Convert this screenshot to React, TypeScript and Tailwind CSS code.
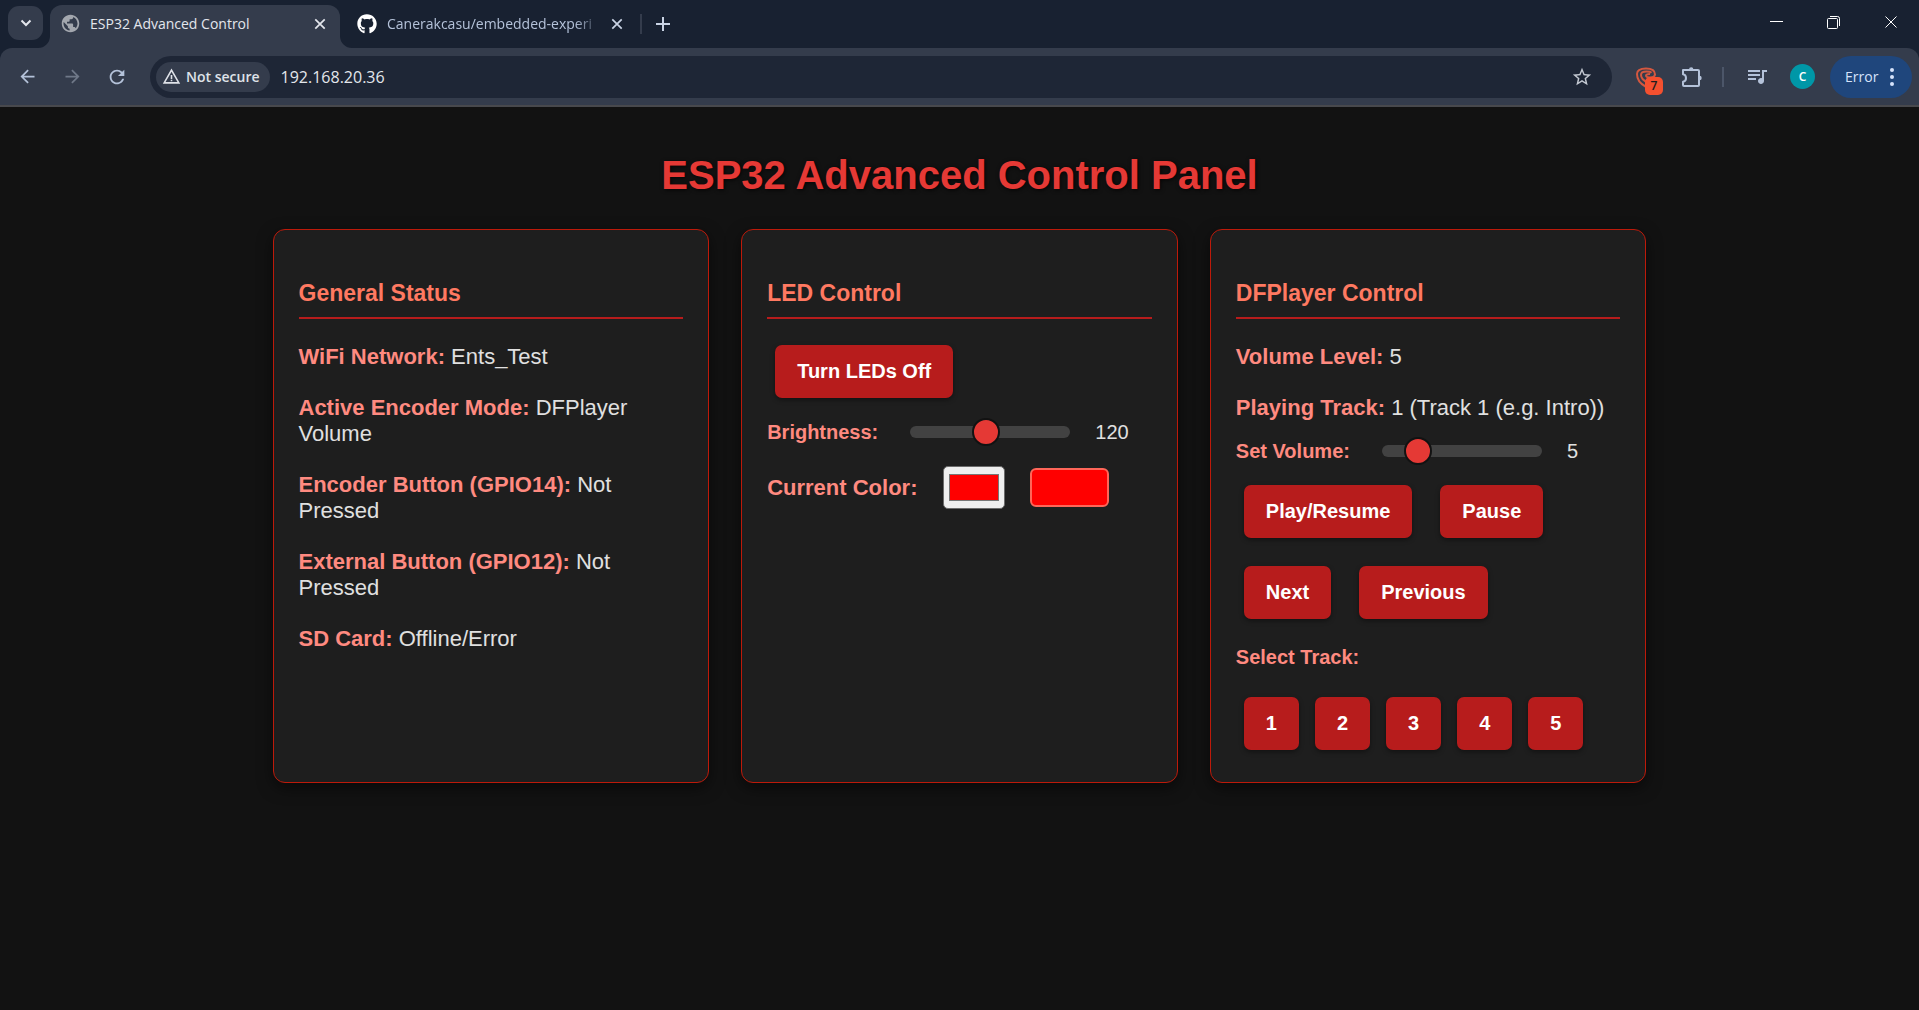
import { useState } from "react";
import type { ReactNode } from "react";
import {
  MdArrowBack,
  MdArrowForward,
  MdPublic,
  MdQueueMusic,
  MdRefresh,
  MdStarBorder,
  MdWarningAmber,
} from "react-icons/md";
import { FaGithub } from "react-icons/fa";

function Cross({ className }: { className: string }) {
  return (
    <svg viewBox="0 0 14 14" className={className} fill="none" stroke="currentColor" aria-hidden="true">
      <path d="M1.5 1.5 12.5 12.5M12.5 1.5 1.5 12.5" />
    </svg>
  );
}

function TabStrip() {
  return (
    <div className="flex h-12 items-stretch pl-2">
      <button
        aria-label="Search tabs"
        className="mt-1.5 flex h-[34px] w-[35px] items-center justify-center rounded-[11px] bg-[#343c4c] text-[#e3e6ec]"
      >
        <svg viewBox="0 0 12 8" className="w-3" fill="none" stroke="currentColor" strokeWidth="2" aria-hidden="true">
          <path d="M1.5 1.5 6 6l4.5-4.5" />
        </svg>
      </button>

      <div className="relative mt-[5px] ml-[7px] flex w-[290px] items-center rounded-t-xl bg-[#343c4c] pr-3.5 pb-1.5 pl-2.5">
        <svg viewBox="0 0 12 12" className="absolute bottom-0 -left-3 w-3" aria-hidden="true">
          <path d="M12 0v12H0A12 12 0 0 0 12 0Z" fill="#343c4c" />
        </svg>
        <svg viewBox="0 0 12 12" className="absolute -right-3 bottom-0 w-3" aria-hidden="true">
          <path d="M0 0v12h12A12 12 0 0 1 0 0Z" fill="#343c4c" />
        </svg>
        <MdPublic className="size-[21px] text-[#a3a7ae]" />
        <span className="ml-[9px] flex-1 text-sm text-[#e3e6ec]">ESP32 Advanced Control</span>
        <button aria-label="Close tab" className="text-[#e3e6ec]">
          <Cross className="w-3 stroke-2" />
        </button>
      </div>

      <div className="mt-[5px] ml-[17px] flex items-center pb-1.5">
        <FaGithub className="size-5 text-white" />
        <span className="ml-2.5 w-[214px] overflow-hidden text-sm whitespace-nowrap text-[#b4c2d9] [mask-image:linear-gradient(to_right,black_88%,transparent)]">
          Canerakcasu/embedded-experi
        </span>
        <button aria-label="Close tab" className="ml-2.5 text-[#c9d3e4]">
          <Cross className="w-3 stroke-2" />
        </button>
        <span className="ml-[17px] h-5 w-0.5 bg-[#343c4c]" />
        <button aria-label="New tab" className="ml-3.5 text-[#c9d3e4]">
          <svg viewBox="0 0 14 14" className="w-3.5" stroke="currentColor" strokeWidth="2" aria-hidden="true">
            <path d="M7 0v14M0 7h14" />
          </svg>
        </button>
      </div>

      <div className="ml-auto flex items-center gap-11 pr-[21px] pb-1 text-white">
        <button aria-label="Minimize">
          <svg viewBox="0 0 13 13" className="w-[13px]" stroke="currentColor" aria-hidden="true">
            <path d="M0 5.5h13" />
          </svg>
        </button>
        <button aria-label="Restore">
          <svg viewBox="0 0 13 13" className="w-[13px]" fill="none" stroke="currentColor" aria-hidden="true">
            <rect x=".5" y="2.5" width="10" height="10" rx="1" />
            <path d="M3 .5h7.5a2 2 0 0 1 2 2V10" />
          </svg>
        </button>
        <button aria-label="Close">
          <Cross className="w-3.5" />
        </button>
      </div>
    </div>
  );
}

function ShieldIcon() {
  return (
    <svg viewBox="0 0 22 22" className="w-[22px]" fill="none" stroke="#d4573f" strokeWidth="2" aria-hidden="true">
      <path d="M20 8.500C20 4 17 2.500 11 2.500S2 4 2 8c0 5.500 3 9.500 8.500 12.500" />
      <path d="M20 8c0 2.800-2 3.500-5 3.500-2.500 0-4-.8-4-2s1.200-1.500 4-1.500" />
      <path d="M16.500 6.800C15.500 5.800 14 5.600 11.500 5.600 7.500 5.600 6 6.800 6 9c0 3.200 2.500 5.500 6.500 7.500" />
    </svg>
  );
}

function Toolbar() {
  return (
    <div className="flex h-[59px] items-center rounded-t-xl border-b-2 border-[#48494d] bg-[#343c4c] pr-[7px] pl-[17px] text-[#b4c2d9]">
      <button aria-label="Back">
        <MdArrowBack className="size-[21px]" />
      </button>
      <button aria-label="Forward" className="ml-6 text-[#6f7888]">
        <MdArrowForward className="size-[21px]" />
      </button>
      <button aria-label="Reload" className="ml-[23px]">
        <MdRefresh className="size-[22px]" />
      </button>

      <div className="ml-[22px] flex h-[42px] flex-1 items-center rounded-full bg-[#1e2636] pr-[19px] pl-1.5">
        <button className="flex h-[30px] items-center rounded-full bg-[#343c4c] pr-2.5 pl-1.5 text-sm font-semibold text-[#dfe2e8]">
          <MdWarningAmber className="mr-[5px] size-[19px]" />
          Not secure
        </button>
        <input
          aria-label="Address"
          defaultValue="192.168.20.36"
          className="ml-[11px] min-w-0 flex-1 bg-transparent text-base text-[#e3e6ec] outline-none"
        />
        <button aria-label="Bookmark this page" className="text-[#c4c9d2]">
          <MdStarBorder className="size-[22px]" />
        </button>
      </div>

      <button aria-label="Content blocker" className="relative ml-[23px]">
        <ShieldIcon />
        <span className="absolute top-[11px] left-2.5 flex size-[18px] items-center justify-center rounded-[5px] bg-[#f4502f] text-xs font-semibold text-[#1d1d1d]">
          7
        </span>
      </button>
      <button aria-label="Extensions" className="ml-6">
        <svg viewBox="0 0 22 22" className="w-[22px]" fill="none" stroke="currentColor" strokeWidth="2" aria-hidden="true">
          <path
            d="M2 4h15a1 1 0 0 1 1 1v14a1 1 0 0 1-1 1H3a1 1 0 0 1-1-1v-3.200c2-.3 3-1.800 3-3.800S4 8.500 2 8.200Z"
            strokeLinejoin="round"
          />
          <path d="M8 3.500a2.200 2.200 0 0 1 4.400 0ZM18.500 9.800a2.200 2.200 0 0 1 0 4.400Z" fill="currentColor" stroke="none" />
        </svg>
      </button>
      <span className="ml-[19px] h-5 w-0.5 bg-[#4c5669]" />
      <button aria-label="Media controls" className="ml-[21px] pb-0.5">
        <MdQueueMusic className="size-6" />
      </button>
      <button
        aria-label="Profile"
        className="ml-[21px] flex size-[25px] items-center justify-center rounded-full bg-[#0097a7] text-xs font-semibold text-white"
      >
        C
      </button>
      <button className="ml-[15px] flex h-[42px] w-[82px] items-center rounded-full bg-[#1f467c] pl-[15px] text-sm text-[#d6e3fb]">
        Error
        <svg viewBox="0 0 4 18" className="ml-3 h-[18px]" fill="currentColor" aria-hidden="true">
          <circle cx="2" cy="2" r="2" />
          <circle cx="2" cy="9" r="2" />
          <circle cx="2" cy="16" r="2" />
        </svg>
      </button>
    </div>
  );
}

function Card({ title, children }: { title: string; children: ReactNode }) {
  return (
    <section className="rounded-xl border border-[#bd1a0a] bg-[#1e1e1e] p-[25px] shadow-[0_5px_15px_rgba(0,0,0,0.5)]">
      <h2 className="mt-[25px] mb-[25px] border-b-2 border-[#b71c1c] pb-[11px] text-[23px] leading-[26px] font-bold text-[#ff7961]">
        {title}
      </h2>
      {children}
    </section>
  );
}

function Field({ label, value }: { label: string; value: string }) {
  return (
    <p>
      <strong className="font-bold text-[#ff8a80]">{label}</strong> {value}
    </p>
  );
}

function ActionButton({ children }: { children: ReactNode }) {
  return (
    <button className="h-[53px] rounded-[7px] bg-[#b71c1c] px-[22px] pb-0.5 text-xl font-bold text-white shadow-[0_2px_5px_rgba(0,0,0,0.4)]">
      {children}
    </button>
  );
}

function SliderRow({ id, label, initial, max }: { id: string; label: string; initial: number; max: number }) {
  const [value, setValue] = useState(initial);
  return (
    <div className="flex h-7 items-center text-xl">
      <label htmlFor={id} className="font-bold text-[#ff8a80]">
        {label}
      </label>
      <input
        id={id}
        type="range"
        min={0}
        max={max}
        value={value}
        onChange={(event) => setValue(Number(event.target.value))}
        className="ml-8 h-3 w-40 appearance-none rounded-full bg-[#424242] [&::-webkit-slider-thumb]:size-7 [&::-webkit-slider-thumb]:appearance-none [&::-webkit-slider-thumb]:rounded-full [&::-webkit-slider-thumb]:border-2 [&::-webkit-slider-thumb]:border-[#121212] [&::-webkit-slider-thumb]:bg-[#e53935]"
      />
      <output htmlFor={id} className="ml-[25px]">
        {value}
      </output>
    </div>
  );
}

const STATUS = [
  { label: "WiFi Network:", value: "Ents_Test" },
  { label: "Active Encoder Mode:", value: "DFPlayer Volume" },
  { label: "Encoder Button (GPIO14):", value: "Not Pressed" },
  { label: "External Button (GPIO12):", value: "Not Pressed" },
  { label: "SD Card:", value: "Offline/Error" },
];

export default function App() {
  const [color, setColor] = useState("#ff0000");
  return (
    <div className="min-h-screen bg-[#121212]">
      <header className="bg-[#182131] font-['Open_Sans',sans-serif]">
        <TabStrip />
        <Toolbar />
      </header>

      <main className="mx-auto max-w-[1374px] pt-[45px] pb-10 font-['Liberation_Sans',Arial,sans-serif] text-[#e0e0e0]">
        <h1 className="mb-[31px] text-center text-[40px] leading-[46px] font-bold text-[#e53935] [text-shadow:1px_1px_4px_rgba(0,0,0,0.8)]">
          ESP32 Advanced Control Panel
        </h1>

        <div className="grid grid-cols-1 gap-8 lg:grid-cols-3">
          <Card title="General Status">
            <div className="flex flex-col gap-[25px] text-[22px] leading-[26px]">
              {STATUS.map((item) => (
                <Field key={item.label} label={item.label} value={item.value} />
              ))}
            </div>
          </Card>

          <Card title="LED Control">
            <div className="flex flex-col gap-5 pt-px">
              <div className="flex pl-2">
                <ActionButton>Turn LEDs Off</ActionButton>
              </div>
              <SliderRow id="brightness" label="Brightness:" initial={120} max={255} />
              <div className="flex items-center">
                <label htmlFor="color" className="text-[22px] leading-[26px] font-bold text-[#ff8a80]">
                  Current Color:
                </label>
                <input
                  id="color"
                  type="color"
                  value={color}
                  onChange={(event) => setColor(event.target.value)}
                  className="ml-[26px] h-[43px] w-[62px] appearance-none rounded-[5px] border border-[#6b6b6b] bg-[#efefef] px-[5px] py-[7px] [&::-webkit-color-swatch]:rounded-none [&::-webkit-color-swatch]:border [&::-webkit-color-swatch]:border-[#777777] [&::-webkit-color-swatch-wrapper]:p-0"
                />
                <span
                  className="ml-[25px] h-[39px] w-[79px] rounded-md border-2 border-[#ff6659]"
                  style={{ backgroundColor: color }}
                />
              </div>
            </div>
          </Card>

          <Card title="DFPlayer Control">
            <div className="mb-4 flex flex-col gap-[25px] text-[22px] leading-[26px]">
              <Field label="Volume Level:" value="5" />
              <Field label="Playing Track:" value="1 (Track 1 (e.g. Intro))" />
            </div>
            <SliderRow id="volume" label="Set Volume:" initial={5} max={30} />
            <div className="mt-5 flex gap-7 pl-2">
              <ActionButton>Play/Resume</ActionButton>
              <ActionButton>Pause</ActionButton>
            </div>
            <div className="mt-7 flex gap-7 pl-2">
              <ActionButton>Next</ActionButton>
              <ActionButton>Previous</ActionButton>
            </div>
            <h3 className="mt-[26px] mb-7 text-xl leading-6 font-bold text-[#ff8a80]">Select Track:</h3>
            <div className="mb-[7px] flex flex-wrap gap-4 pl-2">
              {[1, 2, 3, 4, 5].map((track) => (
                <ActionButton key={track}>{track}</ActionButton>
              ))}
            </div>
          </Card>
        </div>
      </main>
    </div>
  );
}
